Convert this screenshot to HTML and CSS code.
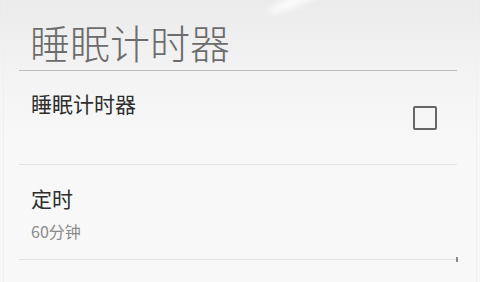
FILE: index.html
```html
<!DOCTYPE html>
<html lang="zh-CN">
<head>
    <meta charset="UTF-8">
    <meta name="viewport" content="width=device-width, initial-scale=1.0">
    <title>睡眠计时器</title>
    <link rel="stylesheet" href="styles.css">
</head>
<body>
    <div class="screen">
        <div class="header">
            <h1 class="title">睡眠计时器</h1>
        </div>
        <div class="pref-list">
            <div class="pref">
                <div class="pref-text">
                    <div class="pref-title">睡眠计时器</div>
                </div>
                <span class="checkbox"></span>
            </div>
            <div class="pref pref-last">
                <div class="pref-text">
                    <div class="pref-title">定时</div>
                    <div class="pref-summary">60分钟</div>
                </div>
            </div>
        </div>
    </div>
</body>
</html>
```

FILE: styles.css
```css
:root {
    --bg: #f8f8f8;
    --title: #6c6c6c;
    --text: #2e2e2e;
    --summary: #8a8a8a;
    --line: #e4e4e4;
}

* {
    margin: 0;
    padding: 0;
    box-sizing: border-box;
}

body {
    width: 480px;
    height: 282px;
    overflow: hidden;
    font-family: "Noto Sans CJK SC", "Noto Sans", sans-serif;
    background: linear-gradient(180deg, #ebebeb 0%, #f3f3f3 70px, var(--bg) 140px);
}

.screen {
    position: relative;
    height: 100%;
    margin: 0 3px;
    padding: 0 19px 0 15px;
    border-left: 1px solid #efefef;
    border-right: 1px solid #efefef;
}

.screen::before {
    content: '';
    position: absolute;
    left: 262px;
    top: -4px;
    width: 60px;
    height: 10px;
    border-radius: 50%;
    background: rgba(255, 255, 255, 0.85);
    filter: blur(3px);
    transform: rotate(-22deg);
}

.header {
    padding: 22px 0 8px 11px;
    border-bottom: 1px solid #bdbdbd;
}

.title {
    font-size: 40px;
    line-height: 40px;
    font-weight: 300;
    color: var(--title);
}

.pref {
    display: flex;
    align-items: center;
    height: 94px;
    padding: 0 20px 0 12px;
    border-bottom: 1px solid var(--line);
}

.pref-last {
    position: relative;
    height: 95px;
}

.pref-last::after {
    content: '';
    position: absolute;
    right: -1px;
    bottom: -3px;
    width: 2px;
    height: 5px;
    background: #8a8a8a;
}

.pref-text {
    flex: 1;
    align-self: flex-start;
    padding-top: 22px;
}

.pref-title {
    font-size: 21px;
    line-height: 21px;
    color: var(--text);
}

.pref-summary {
    margin-top: 14px;
    font-size: 16px;
    line-height: 16px;
    color: var(--summary);
}

.pref-last .pref-text {
    padding-top: 23px;
}

.checkbox {
    width: 24px;
    height: 24px;
    border: 2px solid #666;
    border-radius: 2px;
}
```
